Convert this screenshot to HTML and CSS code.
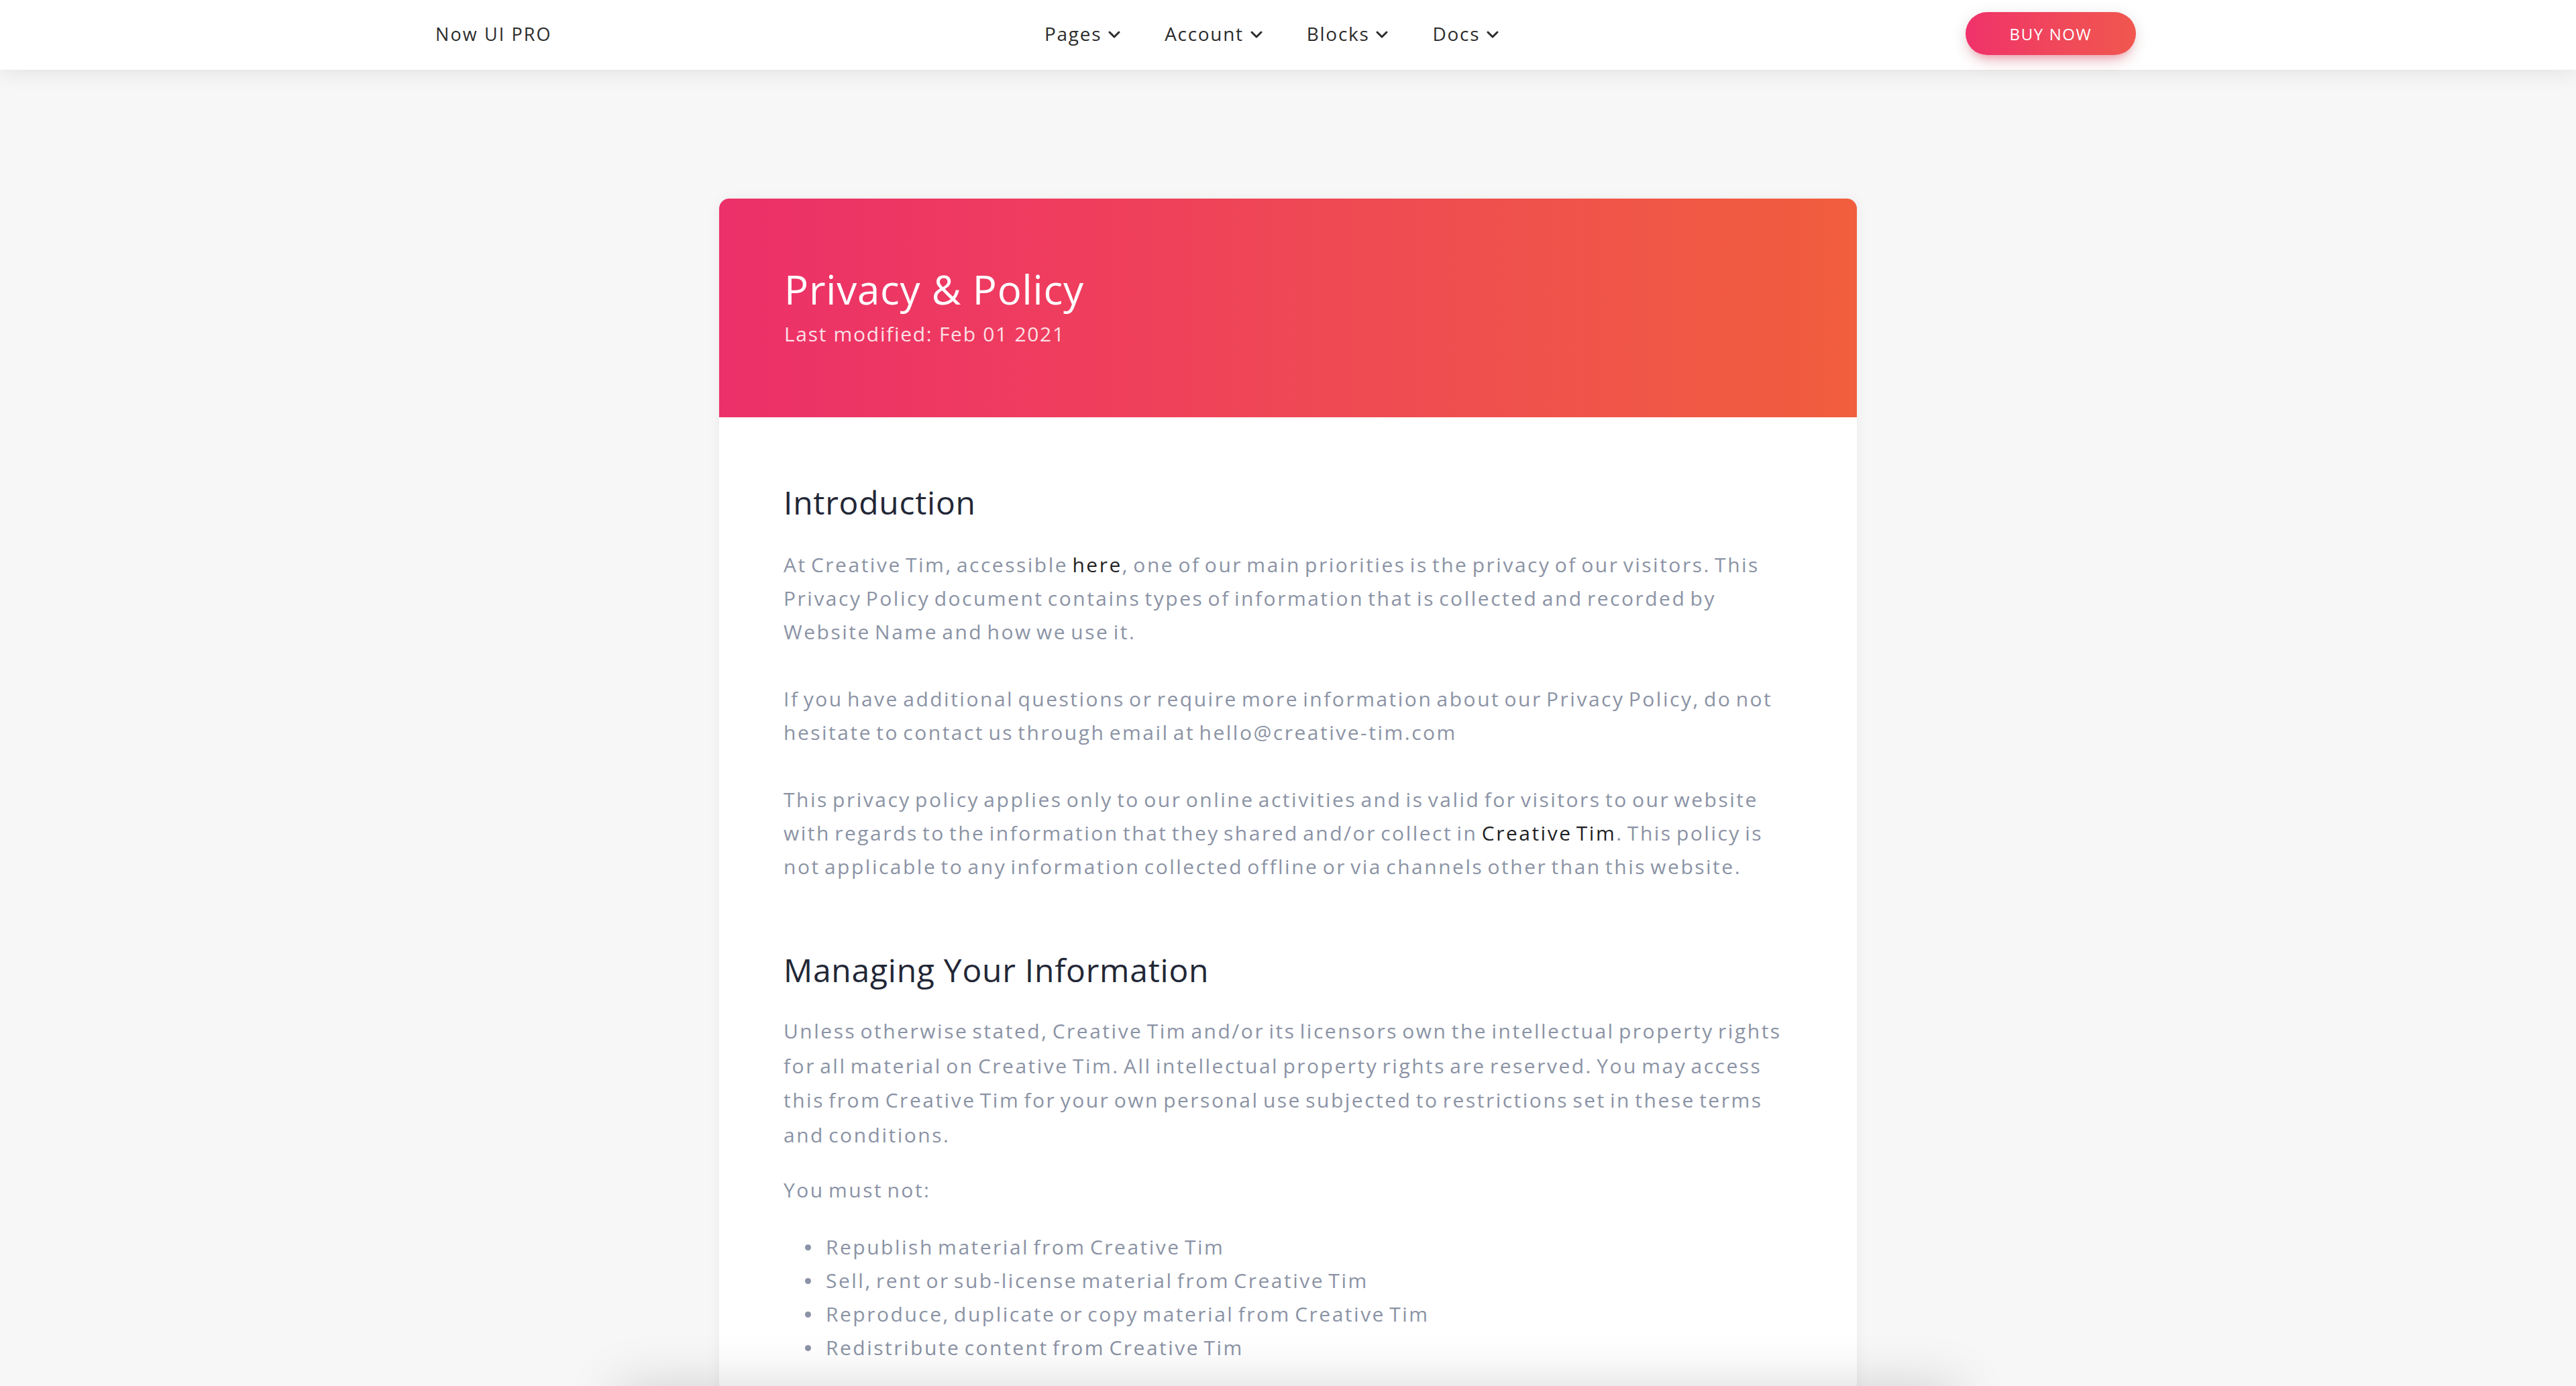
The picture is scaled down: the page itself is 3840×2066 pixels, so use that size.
FILE: index.html
```html
<!DOCTYPE html>
<html lang="en">
<head>
<meta charset="utf-8">
<title>Privacy &amp; Policy - Now UI PRO</title>
<link rel="stylesheet" href="styles.css">
</head>
<body>
<nav class="navbar">
  <div class="navbar-inner">
    <a class="brand" href="#">Now UI PRO</a>
    <ul class="nav-links">
      <li class="nav-item"><span>Pages</span><svg class="chev" viewBox="0 0 18 11"><polyline points="2,2 9,9 16,2"/></svg></li>
      <li class="nav-item"><span>Account</span><svg class="chev" viewBox="0 0 18 11"><polyline points="2,2 9,9 16,2"/></svg></li>
      <li class="nav-item"><span>Blocks</span><svg class="chev" viewBox="0 0 18 11"><polyline points="2,2 9,9 16,2"/></svg></li>
      <li class="nav-item"><span>Docs</span><svg class="chev" viewBox="0 0 18 11"><polyline points="2,2 9,9 16,2"/></svg></li>
    </ul>
    <a class="btn-buy" href="#">BUY NOW</a>
  </div>
</nav>

<main class="page">
  <article class="card">
    <header class="card-header">
      <h1 class="title">Privacy &amp; Policy</h1>
      <p class="subtitle">Last modified: Feb 01 2021</p>
    </header>
    <div class="card-body">
      <h2 class="section-title">Introduction</h2>
      <p>At Creative Tim, accessible <a class="link" href="#">here</a>, one of our main priorities is the privacy of our visitors. This Privacy Policy document contains types of information that is collected and recorded by Website Name and how we use it.</p>
      <p>If you have additional questions or require more information about our Privacy Policy, do not hesitate to contact us through email at hello@creative-tim.com</p>
      <p>This privacy policy applies only to our online activities and is valid for visitors to our website with regards to the information that they shared and/or collect in <a class="link" href="#">Creative Tim</a>. This policy is not applicable to any information collected offline or via channels other than this website.</p>

      <h2 class="section-title section-gap">Managing Your Information</h2>
      <p class="p-tall">Unless otherwise stated, Creative Tim and/or its licensors own the intellectual property rights for all material on Creative Tim. All intellectual property rights are reserved. You may access this from Creative Tim for your own personal use subjected to restrictions set in these terms and conditions.</p>
      <p class="lead-in">You must not:</p>
      <ul class="rules">
        <li>Republish material from Creative Tim</li>
        <li>Sell, rent or sub-license material from Creative Tim</li>
        <li>Reproduce, duplicate or copy material from Creative Tim</li>
        <li>Redistribute content from Creative Tim</li>
      </ul>
    </div>
  </article>
</main>
<div class="bottom-shade"></div>
</body>
</html>
```

FILE: styles.css
```css
html, body {
  margin: 0;
  height: 100%;
  overflow: hidden;
}

body {
  background: #f7f7f7;
  font-family: "Open Sans", "Noto Sans", sans-serif;
  color: #8b93a5;
}

/* ---------- Navbar ---------- */
.navbar {
  height: 104px;
  background: #ffffff;
  box-shadow: 0 4px 30px rgba(0, 0, 0, 0.09);
  position: relative;
  z-index: 2;
}

.navbar-inner {
  height: 100%;
  box-sizing: border-box;
  padding: 0 656px 4px 649px;
  display: flex;
  align-items: center;
}

.brand {
  width: 875px;
  font-size: 27px;
  letter-spacing: 2.1px;
  color: #2c2c2c;
  text-decoration: none;
}

.nav-links {
  display: flex;
  list-style: none;
  margin: 0;
  padding: 0;
}

.nav-item {
  display: flex;
  align-items: center;
  gap: 10px;
  padding: 0 33px;
  font-size: 28px;
  letter-spacing: 1.7px;
  color: #2c2c2c;
}

.chev {
  width: 18px;
  height: 11px;
  margin-top: 3px;
}

.chev polyline {
  fill: none;
  stroke: #2c2c2c;
  stroke-width: 3;
  stroke-linecap: round;
  stroke-linejoin: round;
}

.btn-buy {
  margin-left: auto;
  width: 254px;
  height: 64px;
  border-radius: 32px;
  background: linear-gradient(90deg, #f0326b 0%, #f0485a 55%, #f0574e 100%);
  color: #ffffff;
  font-size: 24px;
  letter-spacing: 1.6px;
  text-decoration: none;
  display: flex;
  align-items: center;
  justify-content: center;
  box-shadow: 0 14px 26px -12px rgba(240, 60, 90, 0.42),
              0 4px 23px 0 rgba(0, 0, 0, 0.1),
              0 8px 10px -5px rgba(240, 60, 90, 0.2);
}

/* ---------- Card ---------- */
.page {
  padding-top: 192px;
  display: flex;
  justify-content: center;
}

.card {
  width: 1696px;
  background: #ffffff;
  border-radius: 15px;
  overflow: hidden;
  box-shadow: 0 1px 20px rgba(0, 0, 0, 0.05);
}

.card-header {
  height: 326px;
  box-sizing: border-box;
  padding: 0 97px;
  display: flex;
  flex-direction: column;
  justify-content: center;
  background: linear-gradient(90deg, #ec3069 0%, #ef3f5c 35%, #ef4f4f 65%, #f15e3d 100%);
  color: #ffffff;
}

.title {
  margin: 0;
  font-size: 60px;
  font-weight: 400;
  line-height: 63px;
  letter-spacing: 0.8px;
}

.subtitle {
  margin: 15px 0 0;
  font-size: 30px;
  line-height: 40px;
  letter-spacing: 1.7px;
  color: rgba(255, 255, 255, 0.86);
}

.card-body {
  padding: 98px 96px 300px;
}

.section-title {
  margin: 0 0 39px;
  font-size: 48px;
  line-height: 58px;
  font-weight: 400;
  letter-spacing: 0.75px;
  color: #222736;
}

.section-gap {
  margin-top: 100px;
  margin-bottom: 36px;
}

.card-body p,
.rules li {
  font-size: 30px;
  line-height: 50px;
  letter-spacing: 2.5px;
  word-spacing: -4px;
}

.card-body p {
  margin: 0 0 50px;
}

.card-body p.p-tall {
  line-height: 51.5px;
  margin-bottom: 32px;
}

.card-body p.lead-in {
  margin-bottom: 35px;
}

.link {
  color: #1f1f24;
  text-decoration: none;
}

.rules {
  list-style: none;
  margin: 0;
  padding: 0 0 0 32px;
}

.rules li {
  display: flex;
  align-items: center;
  gap: 22px;
}

.rules li::before {
  content: "";
  width: 9px;
  height: 9px;
  border-radius: 50%;
  background: #8b93a5;
  flex: none;
}

/* soft shadow cast by content just below the fold */
.bottom-shade {
  position: fixed;
  left: 50%;
  bottom: -160px;
  width: 2000px;
  height: 160px;
  transform: translateX(-50%);
  background: #ffffff;
  box-shadow: 0 0 80px rgba(0, 0, 0, 0.16);
  z-index: 3;
}
```
